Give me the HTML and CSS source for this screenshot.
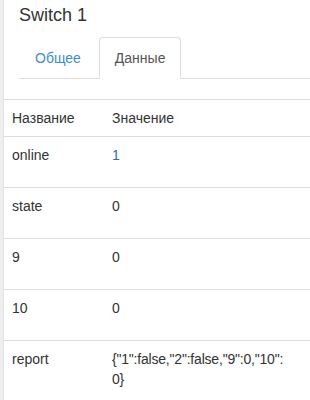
FILE: index.html
```html
<!DOCTYPE html>
<html lang="ru">
<head>
    <meta charset="UTF-8">
    <meta name="viewport" content="width=device-width, initial-scale=1.0">
    <title>Switch 1</title>
    <link rel="stylesheet" href="styles.css">
</head>
<body>

    <div class="panel">
        <div class="panel-head">
            <h3 class="title">Switch 1</h3>
            <ul class="nav-tabs">
                <li class="tab"><a href="#">Общее</a></li>
                <li class="tab active"><a href="#">Данные</a></li>
            </ul>
        </div>

        <table class="props">
            <thead>
                <tr>
                    <th class="name-col">Название</th>
                    <th>Значение</th>
                </tr>
            </thead>
            <tbody>
                <tr>
                    <td>online</td>
                    <td class="val on">1</td>
                </tr>
                <tr>
                    <td>state</td>
                    <td class="val">0</td>
                </tr>
                <tr>
                    <td>9</td>
                    <td class="val">0</td>
                </tr>
                <tr>
                    <td>10</td>
                    <td class="val">0</td>
                </tr>
                <tr>
                    <td>report</td>
                    <td class="val json">{"1":false,"2":false,"9":0,"10":<wbr>0}</td>
                </tr>
            </tbody>
        </table>
    </div>

</body>
</html>
```

FILE: styles.css
```css
html, body {
    margin: 0;
    padding: 0;
    background: #fff;
}

body {
    font-family: "Liberation Sans", Arial, sans-serif;
    font-size: 14px;
    line-height: 20px;
    color: #333;
    border-left: 3px solid #eeeeee;
    min-height: 400px;
}

.panel {
    border-left: 1px solid #e2e2e2;
    min-height: 400px;
}

.panel-head {
    padding: 5px 0 20px 15px;
}

.title {
    margin: 0 0 12px 0;
    font-size: 18px;
    font-weight: normal;
    line-height: 20px;
}

.nav-tabs {
    display: flex;
    list-style: none;
    margin: 0;
    padding: 0;
    border-bottom: 1px solid #ddd;
}

.tab {
    margin: 0 2px -1px 0;
}

.tab a {
    display: block;
    padding: 10px 15px;
    line-height: 20px;
    border: 1px solid transparent;
    border-radius: 4px 4px 0 0;
    color: #428bca;
    text-decoration: none;
}

.tab.active a {
    color: #555;
    background: #fff;
    border-color: #ddd #ddd transparent #ddd;
}

.props {
    width: 100%;
    border-collapse: collapse;
    border-spacing: 0;
}

.props th,
.props td {
    text-align: left;
    vertical-align: top;
    padding: 8px 8px 8px 8px;
    border-top: 1px solid #ddd;
}

.props th {
    font-weight: normal;
}

.props tbody td {
    padding-bottom: 22px;
}

.name-col {
    width: 84px;
}

.val.on {
    color: #2a6ea6;
}

.json {
    letter-spacing: -0.2px;
    padding-right: 24px !important;
}
```
